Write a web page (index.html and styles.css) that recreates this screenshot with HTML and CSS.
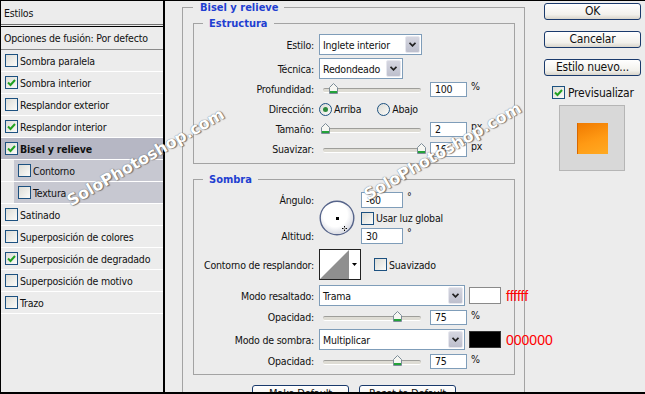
FILE: index.html
```html
<!DOCTYPE html>
<html lang="es">
<head>
    <meta charset="UTF-8">
    <meta name="viewport" content="width=device-width, initial-scale=1.0">
    <title>Estilo de capa</title>
    <link rel="stylesheet" href="styles.css">
</head>
<body>
    <div class="frame">
        <aside class="styles">
            <div class="styles-head">Estilos</div>
            <div class="styles-blend">Opciones de fusión: Por defecto</div>
            <ul class="styles-list">
                <li><span class="check"></span>Sombra paralela</li>
                <li><span class="check on"><svg width="9" height="9" viewBox="0 0 9 9"><path d="M1 4.5 3.5 7 8 2" fill="none" stroke="#21a121" stroke-width="2"/></svg></span>Sombra interior</li>
                <li><span class="check"></span>Resplandor exterior</li>
                <li><span class="check on"><svg width="9" height="9" viewBox="0 0 9 9"><path d="M1 4.5 3.5 7 8 2" fill="none" stroke="#21a121" stroke-width="2"/></svg></span>Resplandor interior</li>
                <li class="sel"><span class="check on"><svg width="9" height="9" viewBox="0 0 9 9"><path d="M1 4.5 3.5 7 8 2" fill="none" stroke="#21a121" stroke-width="2"/></svg></span><b>Bisel y relieve</b></li>
                <li class="sub"><span class="check"></span>Contorno</li>
                <li class="sub"><span class="check"></span>Textura</li>
                <li><span class="check"></span>Satinado</li>
                <li><span class="check"></span>Superposición de colores</li>
                <li><span class="check on"><svg width="9" height="9" viewBox="0 0 9 9"><path d="M1 4.5 3.5 7 8 2" fill="none" stroke="#21a121" stroke-width="2"/></svg></span>Superposición de degradado</li>
                <li><span class="check"></span>Superposición de motivo</li>
                <li><span class="check"></span>Trazo</li>
            </ul>
        </aside>

        <main class="main">
            <fieldset class="group outer">
                <legend>Bisel y relieve</legend>

                <fieldset class="group inner">
                    <legend>Estructura</legend>
                    <div class="row r-estilo">
                        <span class="lbl">Estilo:</span>
                        <div class="select w-estilo"><span class="val">Inglete interior</span><span class="drop"><svg width="7" height="5" viewBox="0 0 7 5"><path d="M0.5 0.8 3.5 3.8 6.5 0.8" fill="none" stroke="#222" stroke-width="1.8"/></svg></span></div>
                    </div>
                    <div class="row r-tecnica">
                        <span class="lbl">Técnica:</span>
                        <div class="select w-tecnica"><span class="val">Redondeado</span><span class="drop"><svg width="7" height="5" viewBox="0 0 7 5"><path d="M0.5 0.8 3.5 3.8 6.5 0.8" fill="none" stroke="#222" stroke-width="1.8"/></svg></span></div>
                    </div>
                    <div class="row r-slide">
                        <span class="lbl">Profundidad:</span>
                        <div class="slider"><span class="thumb" style="left: 10px"><svg width="9" height="11" viewBox="0 0 9 11"><path d="M4.5 0.5 8.5 4.5 8.5 10.5 0.5 10.5 0.5 4.5Z" fill="#f6f6f2" stroke="#7c8c98"/><rect x="1" y="8" width="7" height="2" fill="#23a23a"/></svg></span></div>
                        <input class="num" type="text" value="100">
                        <span class="unit">%</span>
                    </div>
                    <div class="row r-dir">
                        <span class="lbl">Dirección:</span>
                        <span class="radio on"></span><span class="opt">Arriba</span>
                        <span class="radio abajo"></span><span class="opt">Abajo</span>
                    </div>
                    <div class="row r-slide">
                        <span class="lbl">Tamaño:</span>
                        <div class="slider"><span class="thumb" style="left: 2px"><svg width="9" height="11" viewBox="0 0 9 11"><path d="M4.5 0.5 8.5 4.5 8.5 10.5 0.5 10.5 0.5 4.5Z" fill="#f6f6f2" stroke="#7c8c98"/><rect x="1" y="8" width="7" height="2" fill="#23a23a"/></svg></span></div>
                        <input class="num" type="text" value="2">
                        <span class="unit">px</span>
                    </div>
                    <div class="row r-slide">
                        <span class="lbl">Suavizar:</span>
                        <div class="slider"><span class="thumb" style="left: 98px"><svg width="9" height="11" viewBox="0 0 9 11"><path d="M4.5 0.5 8.5 4.5 8.5 10.5 0.5 10.5 0.5 4.5Z" fill="#f6f6f2" stroke="#7c8c98"/><rect x="1" y="8" width="7" height="2" fill="#23a23a"/></svg></span></div>
                        <input class="num" type="text" value="16">
                        <span class="unit">px</span>
                    </div>
                </fieldset>

                <fieldset class="group inner sombra">
                    <legend>Sombra</legend>
                    <div class="angle">
                        <span class="lbl a-top">Ángulo:</span>
                        <div class="dial">
                            <svg width="36" height="36" viewBox="0 0 36 36">
                                <defs>
                                    <radialGradient id="dialfill" cx="0.45" cy="0.4" r="0.6">
                                        <stop offset="0.6" stop-color="#ffffff"/>
                                        <stop offset="1" stop-color="#d6d8e0"/>
                                    </radialGradient>
                                </defs>
                                <circle cx="18" cy="18" r="16.8" fill="url(#dialfill)" stroke="#56648a" stroke-width="1.4"/>
                                <rect x="17" y="17" width="3" height="3" fill="#000"/>
                                <path d="M23 28.5h5M25.5 26v5" stroke="#000" stroke-width="1"/>
                                <path d="M24 28.5h3M25.5 27v3" stroke="#fff" stroke-width="0.5"/>
                            </svg>
                        </div>
                        <div class="a-val"><input class="num wide" type="text" value="-60"><span class="deg">°</span></div>
                        <div class="a-glob"><span class="check"></span>Usar luz global</div>
                        <span class="lbl a-bot">Altitud:</span>
                        <div class="a-alt"><input class="num wide" type="text" value="30"><span class="deg">°</span></div>
                    </div>
                    <div class="row r-contour">
                        <span class="lbl">Contorno de resplandor:</span>
                        <div class="contour">
                            <svg width="42" height="31" viewBox="0 0 42 31">
                                <rect x="0.5" y="0.5" width="41" height="30" fill="#fff" stroke="#222"/>
                                <path d="M1 30 30 1 30 30Z" fill="#8f8f8f"/>
                                <path d="M33 14h5l-2.5 3z" fill="#000"/>
                            </svg>
                        </div>
                        <span class="check smooth"></span><span>Suavizado</span>
                    </div>
                    <div class="row r-mode">
                        <span class="lbl">Modo resaltado:</span>
                        <div class="select w-mode"><span class="val">Trama</span><span class="drop"><svg width="7" height="5" viewBox="0 0 7 5"><path d="M0.5 0.8 3.5 3.8 6.5 0.8" fill="none" stroke="#222" stroke-width="1.8"/></svg></span></div>
                        <span class="color white"></span>
                        <span class="hex">ffffff</span>
                    </div>
                    <div class="row r-op">
                        <span class="lbl">Opacidad:</span>
                        <div class="slider"><span class="thumb" style="left: 74px"><svg width="9" height="11" viewBox="0 0 9 11"><path d="M4.5 0.5 8.5 4.5 8.5 10.5 0.5 10.5 0.5 4.5Z" fill="#f6f6f2" stroke="#7c8c98"/><rect x="1" y="8" width="7" height="2" fill="#23a23a"/></svg></span></div>
                        <input class="num" type="text" value="75">
                        <span class="unit">%</span>
                    </div>
                    <div class="row r-mode2">
                        <span class="lbl">Modo de sombra:</span>
                        <div class="select w-mode"><span class="val">Multiplicar</span><span class="drop"><svg width="7" height="5" viewBox="0 0 7 5"><path d="M0.5 0.8 3.5 3.8 6.5 0.8" fill="none" stroke="#222" stroke-width="1.8"/></svg></span></div>
                        <span class="color black"></span>
                        <span class="hex">000000</span>
                    </div>
                    <div class="row r-op">
                        <span class="lbl">Opacidad:</span>
                        <div class="slider"><span class="thumb" style="left: 74px"><svg width="9" height="11" viewBox="0 0 9 11"><path d="M4.5 0.5 8.5 4.5 8.5 10.5 0.5 10.5 0.5 4.5Z" fill="#f6f6f2" stroke="#7c8c98"/><rect x="1" y="8" width="7" height="2" fill="#23a23a"/></svg></span></div>
                        <input class="num" type="text" value="75">
                        <span class="unit">%</span>
                    </div>
                </fieldset>

                <div class="defaults">
                    <button class="btn-xp">Make Default</button>
                    <button class="btn-xp">Reset to Default</button>
                </div>
            </fieldset>
        </main>

        <div class="side">
            <button class="btn-side">OK</button>
            <button class="btn-side">Cancelar</button>
            <button class="btn-side">Estilo nuevo...</button>
            <div class="preview-check">
                <span class="check on"><svg width="9" height="9" viewBox="0 0 9 9"><path d="M1 4.5 3.5 7 8 2" fill="none" stroke="#21a121" stroke-width="2"/></svg></span>Previsualizar
            </div>
            <div class="preview"><span class="preview-swatch"></span></div>
        </div>

        <span class="mark mark-1">SoloPhotoshop.com</span>
        <span class="mark mark-2">SoloPhotoshop.com</span>
    </div>
</body>
</html>
```

FILE: styles.css
```css
*{
    margin: 0;
    padding: 0;
    box-sizing: border-box;
}
body{
    width: 645px;
    height: 394px;
    overflow: hidden;
    background: #ececec;
    font-family: "DejaVu Sans Condensed", "DejaVu Sans", sans-serif;
    font-size: 10.5px;
    letter-spacing: -0.2px;
    color: #111;
}
input, button{
    font-family: inherit;
    font-size: 10.5px;
    letter-spacing: -0.2px;
    color: #111;
}
.frame{
    position: relative;
    display: flex;
    height: 394px;
    border-top: 1px solid #000;
    border-left: 1px solid #000;
    border-bottom: 2px solid #000;
    overflow: hidden;
}

/* left list of styles */
.styles{
    width: 164px;
    flex: none;
    border-right: 2px solid #000;
}
.styles-head{
    height: 24px;
    padding-left: 3px;
    display: flex;
    align-items: center;
    border-bottom: 1px solid #707070;
}
.styles-blend{
    height: 24px;
    margin-top: 1px;
    padding-left: 3px;
    display: flex;
    align-items: center;
    border-top: 1px solid #000;
    border-bottom: 1px solid #8a8a8a;
}
.styles-list{
    list-style: none;
}
.styles-list li{
    height: 22px;
    padding-left: 4px;
    display: flex;
    align-items: center;
    border-bottom: 1px solid #fff;
    white-space: nowrap;
}
.styles-list li.sel{
    background: #b6b7c4;
}
.styles-list li.sub{
    padding-left: 17px;
    background: linear-gradient(to right, #ececec 13px, #c7c8d1 13px);
}
.check{
    width: 13px;
    height: 13px;
    margin-right: 2px;
    flex: none;
    display: inline-flex;
    align-items: center;
    justify-content: center;
    border: 1px solid #1c5180;
    background: linear-gradient(135deg, #dcdcd6, #fbfbf9);
}

/* center panel */
.main{
    width: 360px;
    flex: none;
    padding-left: 17px;
}
.group{
    margin: 0;
    min-width: 0;
    border: 1px solid #a3a3a3;
}
.group legend{
    font-weight: bold;
    color: #1f3fd1;
    line-height: 13px;
    font-size: 11px;
    letter-spacing: 0;
}
.outer{
    width: 343px;
    height: 420px;
    padding: 3px 9px 0 10px;
    border-bottom: none;
}
.outer > legend{
    padding: 0 5px 0 7px;
}
.inner{
    width: 322px;
    padding: 4px 0 4px;
}
.inner > legend{
    margin-left: 9px;
    padding: 0 6px;
}
.sombra{
    margin-top: 9px;
    padding: 6px 0 4px;
}
.row{
    display: flex;
    align-items: center;
    white-space: nowrap;
}
.row > *{
    flex: none;
}
.lbl{
    width: 125px;
    flex: none;
    padding-right: 5px;
    text-align: right;
    white-space: nowrap;
}
.r-estilo{ height: 21px; }
.r-tecnica{ height: 21px; margin-top: 3px; }
.r-slide, .r-dir{ height: 20px; }
.r-contour{ height: 31px; margin-top: 5px; }
.r-mode{ height: 21px; margin-top: 5px; }
.r-mode2{ height: 21px; margin-top: 3px; }
.r-op{ height: 18px; margin-top: 2px; }

.select{
    height: 21px;
    display: flex;
    border: 1px solid #7f9db9;
    background: #fff;
}
.select .val{
    flex: 1;
    padding-left: 3px;
    display: flex;
    align-items: center;
}
.select .drop{
    width: 15px;
    margin: 1px;
    display: flex;
    align-items: center;
    justify-content: center;
    border: 1px solid #e6e7ee;
    border-radius: 2px;
    background: linear-gradient(#d5d6e0, #bdbfcd);
}
.w-estilo{ width: 103px; }
.w-tecnica{ width: 84px; }
.w-mode{ width: 146px; }

.slider{
    position: relative;
    width: 107px;
    height: 16px;
    flex: none;
}
.slider::before{
    content: "";
    position: absolute;
    left: 4px;
    top: 7px;
    width: 98px;
    height: 3px;
    border-radius: 2px;
    border-top: 1px solid #9e9e9a;
    border-bottom: 1px solid #fff;
    background: #dedcd4;
}
.thumb{
    position: absolute;
    top: 2px;
    display: block;
    line-height: 0;
}
.num{
    width: 37px;
    height: 15px;
    margin-left: 4px;
    padding-left: 4px;
    border: 1px solid #7f9db9;
    background: #fff;
    outline: none;
}
.num.wide{
    width: 42px;
    margin-left: 0;
}
.unit{
    margin-left: 4px;
    align-self: flex-start;
    margin-top: 1px;
}

.radio{
    width: 13px;
    height: 13px;
    flex: none;
    display: inline-flex;
    align-items: center;
    justify-content: center;
    border: 1px solid #1c5180;
    border-radius: 50%;
    background: linear-gradient(135deg, #dcdcd6, #fbfbf9);
}
.radio.on::after{
    content: "";
    width: 5px;
    height: 5px;
    border-radius: 50%;
    background: #2d8a3c;
}
.opt{
    margin-left: 2px;
}
.radio.abajo{
    margin-left: 16px;
}

/* angle block */
.angle{
    display: grid;
    grid-template-columns: 125px 42px auto;
    grid-template-rows: 16px 16px 16px;
    row-gap: 2px;
    align-items: center;
    white-space: nowrap;
}
.a-top{ grid-column: 1; grid-row: 1; }
.a-bot{ grid-column: 1; grid-row: 3; }
.dial{
    grid-column: 2;
    grid-row: 1 / 4;
    line-height: 0;
}
.a-val{ grid-column: 3; grid-row: 1; display: flex; }
.a-glob{ grid-column: 3; grid-row: 2; display: flex; align-items: center; }
.a-alt{ grid-column: 3; grid-row: 3; display: flex; }
.a-val .num, .a-alt .num{
    height: 16px;
}
.deg{
    margin-left: 4px;
    line-height: 9px;
}

.contour{
    line-height: 0;
}
.check.smooth{
    margin-left: 13px;
}

.color{
    width: 32px;
    height: 17px;
    margin-left: 4px;
    border: 1px solid #8a8a8a;
}
.color.white{ background: #fff; }
.color.black{ background: #000; border-color: #333; }
.hex{
    margin-left: 5px;
    color: #f00;
    font-family: "Liberation Sans", sans-serif;
    font-size: 14px;
    letter-spacing: 0;
}

.defaults{
    display: flex;
    gap: 10px;
    margin-top: 10px;
    padding-left: 59px;
}
.btn-xp{
    width: 97px;
    height: 17px;
    border: 1px solid #1a3a6c;
    border-radius: 3px;
    background: linear-gradient(#fff, #f2f1ec 70%, #d9d5cb);
    line-height: 15px;
    font-size: 11px;
}

/* right side */
.side{
    flex: 1;
    padding: 2px 0 0 19px;
}
.btn-side{
    display: block;
    width: 97px;
    height: 17px;
    margin-bottom: 11px;
    border: 1px solid #1a3a6c;
    border-radius: 3px;
    background: linear-gradient(#fff, #f2f1ec 70%, #d9d5cb);
    font-size: 12px;
    line-height: 15px;
}
.preview-check{
    display: flex;
    align-items: center;
    height: 13px;
    margin: -1px 0 0 8px;
    font-size: 12px;
}
.preview-check .check{
    margin-right: 3px;
}
.preview{
    width: 66px;
    height: 66px;
    margin: 6px 0 0 15px;
    display: flex;
    align-items: center;
    justify-content: center;
    background: #d8d8d8;
    border: 1px solid #b5b5b5;
}
.preview-swatch{
    width: 31px;
    height: 31px;
    border-left: 1px solid #d86800;
    background: linear-gradient(160deg, #f07a00, #ff9a14 55%, #ffaa22);
}

/* watermark */
.mark{
    position: absolute;
    white-space: nowrap;
    pointer-events: none;
    font-family: "DejaVu Sans", sans-serif;
    font-weight: bold;
    font-size: 16px;
    letter-spacing: 0;
    color: #fff;
    text-shadow: 0 0 1px #555, 1px 1px 1px #777;
    transform-origin: 0 100%;
    transform: rotate(-30deg);
}
.mark-1{
    left: 72px;
    top: 190px;
}
.mark-2{
    left: 369px;
    top: 184px;
}
```
